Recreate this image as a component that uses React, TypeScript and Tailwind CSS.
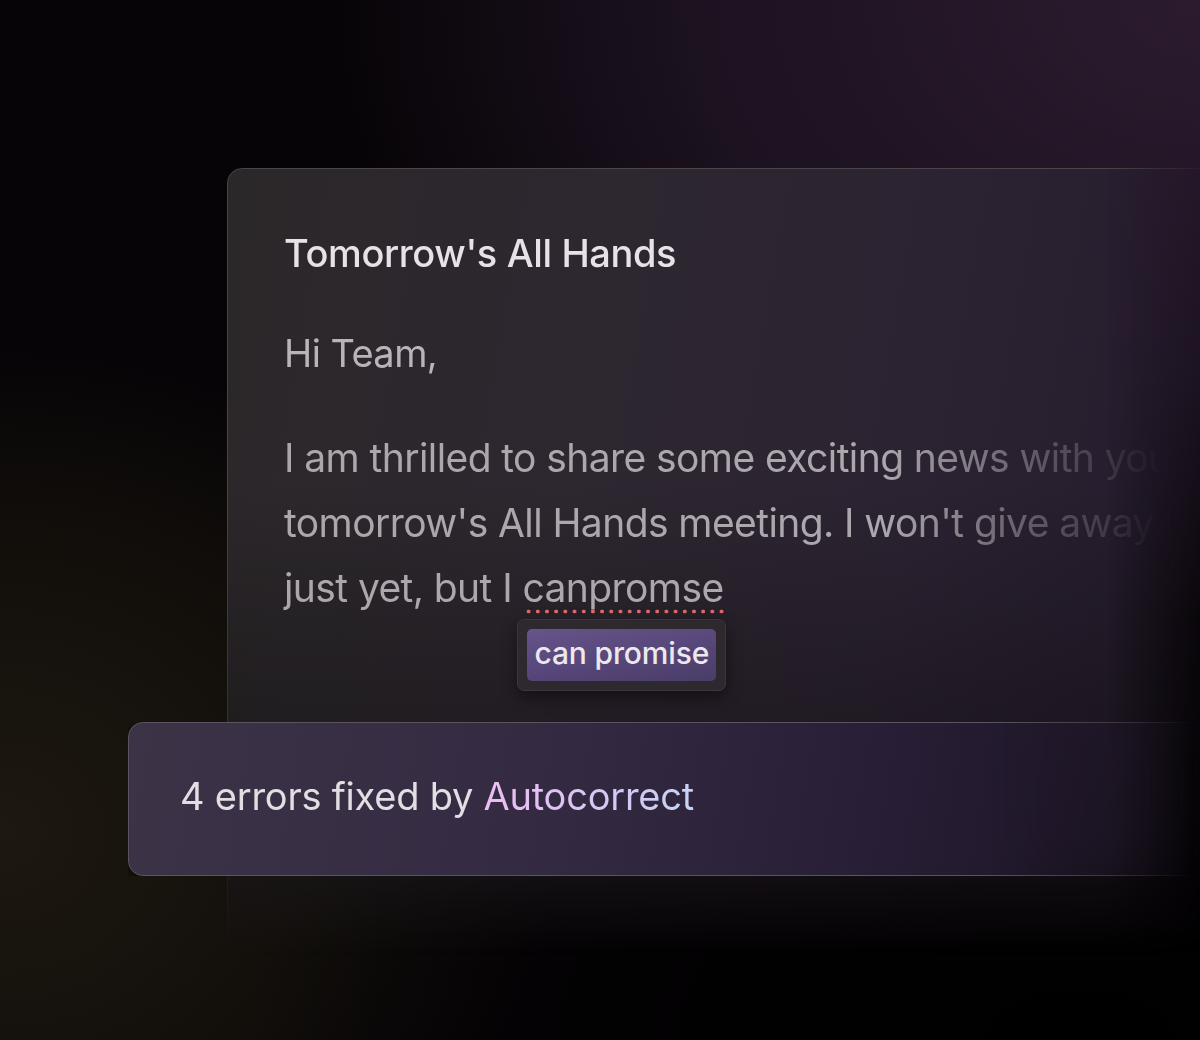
import React from "react";

const fontStack = { fontFamily: "Inter, 'Noto Sans', sans-serif" };

function Suggestion() {
  return (
    <div className="absolute left-[-5px] top-[55px] rounded-[7px] border border-[#3a363b] bg-[#2d292e] p-[9px] shadow-[0_6px_16px_rgba(0,0,0,0.45)]">
      <div className="whitespace-nowrap rounded-[5px] bg-[linear-gradient(170deg,#67548a_0%,#564679_55%,#4a3d66_100%)] px-[7px] pb-[8px] pt-[4px] text-[30px] font-medium leading-[40px] tracking-[-0.005em] text-[#ece8ee]">
        can promise
      </div>
    </div>
  );
}

function MisspelledWord({ children }: { children: React.ReactNode }) {
  return (
    <span className="relative inline-block leading-[48px]">
      {children}
      <span className="absolute left-[2px] right-[-2px] top-[45px] h-[5px] bg-[radial-gradient(circle,#e46a6c_1.6px,transparent_2.2px)] bg-[length:9.2px_5px] bg-repeat-x" />
      <Suggestion />
    </span>
  );
}

const fadeLine =
  "w-[1000px] whitespace-nowrap [mask-image:linear-gradient(to_right,black_0%,black_60%,rgba(0,0,0,0.4)_76%,transparent_89%)]";

export default function App() {
  return (
    <div
      className="relative h-[1040px] w-full overflow-hidden bg-[#070407]"
      style={fontStack}
    >
      {/* background glows */}
      <div className="absolute inset-0 bg-[radial-gradient(ellipse_85%_70%_at_100%_0%,#2c1b2f_0%,#1c1220_50%,transparent_85%)]" />
      <div className="absolute inset-0 bg-[radial-gradient(ellipse_55%_55%_at_0%_80%,#1d1810_0%,#120f0b_50%,transparent_85%)]" />
      <div className="absolute inset-0 bg-[radial-gradient(ellipse_70%_45%_at_90%_100%,rgba(0,0,0,0.95)_0%,rgba(0,0,0,0.6)_55%,transparent_100%)]" />

      <div className="relative pl-[227px] pt-[168px]">
        {/* document card */}
        <div className="relative h-[787px] w-[1000px] [mask-image:linear-gradient(to_right,black_0%,black_88%,transparent_99%),linear-gradient(to_bottom,black_0%,black_85%,transparent_100%)] [mask-composite:intersect]">
          <div className="absolute inset-0 rounded-[15px] border border-[#4b4549] bg-[linear-gradient(100deg,#2b2829_0%,#2d2730_35%,#2c2332_65%,#22182a_100%)]" />
          <div className="absolute inset-0 rounded-[15px] bg-[linear-gradient(180deg,transparent_40%,rgba(10,8,8,0.55)_90%)]" />

          <div className="relative pl-[57px] pt-[60px]">
            <h1 className="text-[38px] font-medium leading-[50px] tracking-[-0.01em] text-[#e7e2e8]">
              Tomorrow's All Hands
            </h1>
            <p className="mt-[50px] text-[38px] leading-[50px] tracking-[-0.015em] text-[#b9b4b9]">
              Hi Team,
            </p>
            <div className="mt-[47px] text-[39px] leading-[65px] tracking-[-0.015em] text-[#aca7ac]">
              <p className={fadeLine}>I am thrilled to share some exciting news with you at</p>
              <p className={fadeLine}>tomorrow's All Hands meeting. I won't give away the details</p>
              <p className="whitespace-nowrap">
                just yet, but I <MisspelledWord>canpromse</MisspelledWord>
              </p>
            </div>
          </div>
        </div>

        {/* autocorrect banner */}
        <div className="absolute left-[128px] top-[722px] h-[154px] w-[1100px] [mask-image:linear-gradient(to_right,black_0%,black_78%,rgba(0,0,0,0.6)_89%,transparent_97%)]">
          <div className="flex h-full items-center rounded-[15px] border border-[#5b5460] bg-[linear-gradient(100deg,#3d3347_0%,#332a42_40%,#291f37_65%,#1a1222_100%)] pb-[6px] pl-[51px] shadow-[0_10px_30px_rgba(0,0,0,0.5)]">
            <p className="text-[38px] leading-none tracking-[-0.006em] text-[#e3dee4]">
              4 errors fixed by{" "}
              <span className="bg-[linear-gradient(90deg,#ecbdf2_0%,#d9c6f3_50%,#c6d3f4_100%)] bg-clip-text text-transparent">
                Autocorrect
              </span>
            </p>
          </div>
        </div>
      </div>
    </div>
  );
}
